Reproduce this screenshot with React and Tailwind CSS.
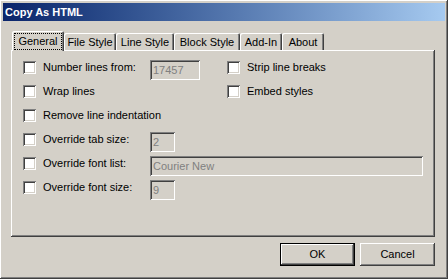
import React from "react";

const raised =
  "shadow-[inset_-1px_-1px_0_#404040,inset_1px_1px_0_#ffffff,inset_-2px_-2px_0_#808080,inset_2px_2px_0_#d4d0c8]";
const sunken =
  "shadow-[inset_1px_1px_0_#808080,inset_-1px_-1px_0_#ffffff,inset_2px_2px_0_#404040,inset_-2px_-2px_0_#d4d0c8]";

function Check({ label }) {
  return (
    <div className="flex items-center h-[13px] mt-[1px]">
      <div className={`w-[13px] h-[13px] bg-white shrink-0 ${sunken}`} />
      <span className="ml-[7px] leading-[13px] whitespace-nowrap">{label}</span>
    </div>
  );
}

function Edit({ w, value }) {
  return (
    <div
      className={`h-[20px] bg-[#d4d0c8] flex items-center pl-[3px] text-[#808080] shrink-0 ${sunken} ${w}`}
    >
      {value}
    </div>
  );
}

function Tab({ label, w, selected }) {
  if (selected) {
    return (
      <div
        className={`${w} h-[20px] -mb-[1px] z-10 relative bg-[#d4d0c8] rounded-t-[2px] flex items-start justify-center pt-[2px] px-[2px] shadow-[inset_1px_1px_0_#ffffff,inset_-1px_0_0_#404040,inset_-2px_0_0_#808080]`}
      >
        <div className="w-full h-[17px] border border-dotted border-black flex items-center justify-center">
          {label}
        </div>
      </div>
    );
  }
  return (
    <div
      className={`${w} h-[17px] bg-[#d4d0c8] rounded-t-[2px] flex items-center justify-center pt-[1px] shadow-[inset_1px_1px_0_#ffffff,inset_-1px_0_0_#404040,inset_-2px_0_0_#808080]`}
    >
      {label}
    </div>
  );
}

export default function App() {
  return (
    <div
      className={`w-[448px] h-[279px] bg-[#d4d0c8] p-[3px] flex flex-col text-[11px] text-black ${raised}`}
      style={{ fontFamily: '"Liberation Sans", Arial, sans-serif' }}
    >
      <div className="h-[18px] shrink-0 bg-linear-to-r from-[#0a246a] to-[#a6caf0] flex items-center pl-[2px] text-white font-bold">
        Copy As HTML
      </div>
      <div className="pl-[8px] pr-[10px] pt-[10px] flex flex-col">
        <div className="flex items-end h-[19px] pl-[1px]">
          <Tab label="General" w="w-[52px]" selected />
          <Tab label="File Style" w="w-[52px]" />
          <Tab label="Line Style" w="w-[58px]" />
          <Tab label="Block Style" w="w-[66px]" />
          <Tab label="Add-In" w="w-[42px]" />
          <Tab label="About" w="w-[42px]" />
        </div>
        <div
          className={`h-[187px] bg-[#d4d0c8] pl-[12px] pt-[10px] flex flex-col shadow-[inset_-1px_-1px_0_#404040,inset_1px_1px_0_#ffffff,inset_-2px_-2px_0_#808080]`}
        >
          <div className="flex items-start h-[24px]">
            <div className="w-[127px]">
              <Check label="Number lines from:" />
            </div>
            <Edit w="w-[50px]" value="17457" />
            <div className="ml-[27px]">
              <Check label="Strip line breaks" />
            </div>
          </div>
          <div className="flex items-start h-[24px]">
            <div className="w-[204px]">
              <Check label="Wrap lines" />
            </div>
            <Check label="Embed styles" />
          </div>
          <div className="flex items-start h-[24px]">
            <Check label="Remove line indentation" />
          </div>
          <div className="flex items-start h-[24px]">
            <div className="w-[127px]">
              <Check label="Override tab size:" />
            </div>
            <Edit w="w-[25px]" value="2" />
          </div>
          <div className="flex items-start h-[24px]">
            <div className="w-[127px]">
              <Check label="Override font list:" />
            </div>
            <Edit w="w-[273px]" value="Courier New" />
          </div>
          <div className="flex items-start h-[24px]">
            <div className="w-[127px]">
              <Check label="Override font size:" />
            </div>
            <Edit w="w-[25px]" value="9" />
          </div>
        </div>
        <div className="flex justify-end gap-[5px] mt-[6px]">
          <div className="w-[75px] h-[23px] bg-black p-[1px]">
            <div
              className={`w-full h-full bg-[#d4d0c8] flex items-center justify-center ${raised}`}
            >
              OK
            </div>
          </div>
          <div
            className={`w-[75px] h-[23px] bg-[#d4d0c8] flex items-center justify-center ${raised}`}
          >
            Cancel
          </div>
        </div>
      </div>
    </div>
  );
}
